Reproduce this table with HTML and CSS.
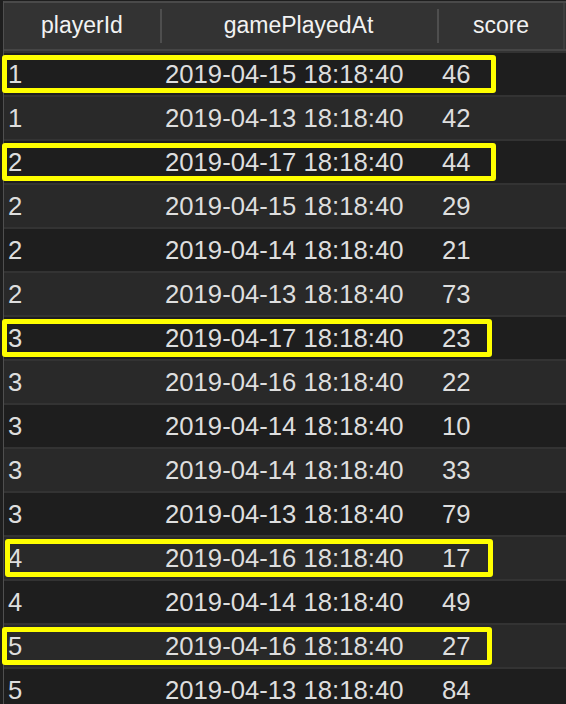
FILE: index.html
```html
<!DOCTYPE html>
<html>
<head>
<meta charset="utf-8">
<link rel="stylesheet" href="styles.css">
</head>
<body>
<div class="grid">
  <div class="head">
    <div class="hc c1">playerId</div>
    <div class="hc c2">gamePlayedAt</div>
    <div class="hc c3">score</div>
  </div>
  <div class="row odd"><span class="hl hl-a"></span><div class="c c1">1</div><div class="c c2">2019-04-15 18:18:40</div><div class="c c3">46</div></div>
  <div class="row even"><div class="c c1">1</div><div class="c c2">2019-04-13 18:18:40</div><div class="c c3">42</div></div>
  <div class="row odd"><span class="hl hl-a"></span><div class="c c1">2</div><div class="c c2">2019-04-17 18:18:40</div><div class="c c3">44</div></div>
  <div class="row even"><div class="c c1">2</div><div class="c c2">2019-04-15 18:18:40</div><div class="c c3">29</div></div>
  <div class="row odd"><div class="c c1">2</div><div class="c c2">2019-04-14 18:18:40</div><div class="c c3">21</div></div>
  <div class="row even"><div class="c c1">2</div><div class="c c2">2019-04-13 18:18:40</div><div class="c c3">73</div></div>
  <div class="row odd"><span class="hl hl-b"></span><div class="c c1">3</div><div class="c c2">2019-04-17 18:18:40</div><div class="c c3">23</div></div>
  <div class="row even"><div class="c c1">3</div><div class="c c2">2019-04-16 18:18:40</div><div class="c c3">22</div></div>
  <div class="row odd"><div class="c c1">3</div><div class="c c2">2019-04-14 18:18:40</div><div class="c c3">10</div></div>
  <div class="row even"><div class="c c1">3</div><div class="c c2">2019-04-14 18:18:40</div><div class="c c3">33</div></div>
  <div class="row odd"><div class="c c1">3</div><div class="c c2">2019-04-13 18:18:40</div><div class="c c3">79</div></div>
  <div class="row even"><span class="hl hl-c"></span><div class="c c1">4</div><div class="c c2">2019-04-16 18:18:40</div><div class="c c3">17</div></div>
  <div class="row odd"><div class="c c1">4</div><div class="c c2">2019-04-14 18:18:40</div><div class="c c3">49</div></div>
  <div class="row even"><span class="hl hl-b"></span><div class="c c1">5</div><div class="c c2">2019-04-16 18:18:40</div><div class="c c3">27</div></div>
  <div class="row odd"><div class="c c1">5</div><div class="c c2">2019-04-13 18:18:40</div><div class="c c3">84</div></div>
</div>
</body>
</html>
```
FILE: styles.css
```css
html, body {
  margin: 0;
  padding: 0;
  background: #1e1e1e;
  overflow: hidden;
}
body {
  width: 566px;
  height: 704px;
  font-family: "Liberation Sans", Arial, sans-serif;
  font-size: 25.7px;
  color: #dedede;
}
.grid {
  margin-left: 3px;
  border-left: 1px solid #4f4f4f;
  height: 704px;
}
.head {
  display: grid;
  grid-template-columns: 156px 277px 128px;
  height: 46px;
  margin-top: 1px;
  border-top: 2px solid #4a4a4a;
  border-bottom: 2px solid #454545;
  background: #333333;
  color: #f2f2f2;
  font-size: 23px;
}
.hc {
  display: flex;
  align-items: center;
  justify-content: center;
  position: relative;
  padding-bottom: 2px;
}
.hc.c2::before, .hc.c3::before {
  content: "";
  position: absolute;
  left: 0;
  top: 6px;
  bottom: 6px;
  width: 2px;
  background: #4e4e4e;
}
.hc.c3::after {
  content: "";
  position: absolute;
  right: 0;
  top: 0;
  bottom: 0;
  width: 2px;
  background: #3e3e3e;
}
.row {
  position: relative;
  display: grid;
  grid-template-columns: 156px 277px 128px;
  height: 42px;
  border-top: 2px solid #333333;
  align-items: center;
}
.row.odd { background: #1e1e1e; }
.row.even { background: #292929; }
.c {
  padding-left: 5px;
  white-space: nowrap;
}
.c.c1 { padding-left: 4px; }
.hl {
  position: absolute;
  top: 2px;
  left: -2px;
  height: 38px;
  box-sizing: border-box;
  border: 5px solid #ffff00;
  border-radius: 3px;
  z-index: 2;
}
.hl-a { width: 494px; }
.hl-b { width: 490px; }
.hl-c { width: 488px; left: 1px; }
```
